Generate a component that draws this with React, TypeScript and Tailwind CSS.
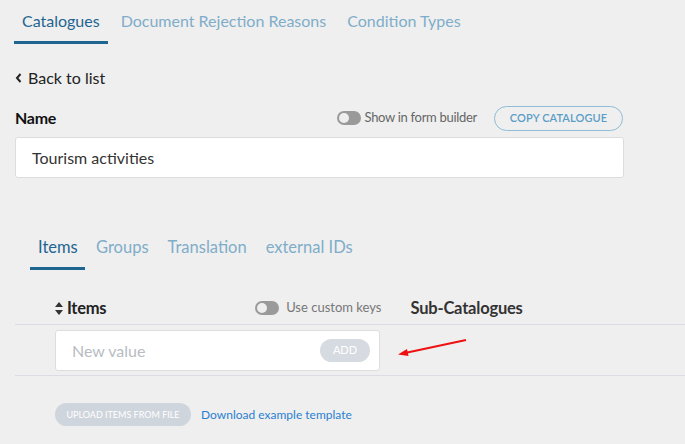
import React from 'react';

const Toggle: React.FC = () => (
    <span className="relative inline-block w-[24px] h-[14px] rounded-full bg-[#9a9a9a]">
        <span className="absolute left-[2px] top-[2px] w-[10px] h-[10px] rounded-full bg-[#eeeeee]" />
    </span>
);

const SortIcon: React.FC = () => (
    <svg width="8" height="13" viewBox="0 0 8 13" className="mr-[4px]">
        <path d="M4 0 L8 5 H0 Z" fill="#333" />
        <path d="M4 13 L8 8 H0 Z" fill="#333" />
    </svg>
);

const App: React.FC = () => {
    const topTabs = ['Catalogues', 'Document Rejection Reasons', 'Condition Types'];
    const innerTabs = ['Items', 'Groups', 'Translation', 'external IDs'];

    return (
        <div className="w-[685px] h-[444px] bg-[#efefef] overflow-hidden font-['Lato',sans-serif] relative">
            {/* main tabs */}
            <div className="flex pl-[14px] pt-[8px]">
                {topTabs.map((t, i) => (
                    <div
                        key={t}
                        className={`px-[8px] h-[36px] flex items-start pt-[1px] text-[16px] leading-[24px] ${i === 0 ? 'text-[#1f6592] border-b-[3px] border-[#1f6592]' : 'text-[#7fadc9] ml-[5px]'}`}
                    >
                        {t}
                    </div>
                ))}
            </div>

            {/* back link */}
            <div className="flex items-center pl-[15px] mt-[22px] text-[16px] leading-[24px] text-[#222]">
                <svg width="8" height="10" viewBox="0 0 8 10" className="mr-[5px]">
                    <path d="M5.5 1 L2 5 L5.5 9" stroke="#222" strokeWidth="2" fill="none" />
                </svg>
                Back to list
            </div>

            {/* name header */}
            <div className="flex items-center w-[623px] pl-[15px] mt-[15px] h-[26px]">
                <span className="text-[16px] font-bold text-[#111] tracking-[-0.3px]">Name</span>
                <div className="ml-auto flex items-center">
                    <Toggle />
                    <span className="ml-[3px] text-[13px] text-[#666] tracking-[-0.3px]">Show in form builder</span>
                    <button className="ml-[17px] h-[25px] w-[129px] rounded-full border border-[#8fbcd6] text-[11px] font-semibold text-[#5a9dc6] tracking-[0.1px]">
                        COPY CATALOGUE
                    </button>
                </div>
            </div>

            <div className="ml-[15px] mt-[6px] w-[609px] h-[41px] bg-white border border-[#dddddd] rounded-[3px] flex items-center pl-[16px] text-[16px] text-[#333]">
                Tourism activities
            </div>

            {/* inner tabs */}
            <div className="flex pl-[30px] mt-[54px]">
                {innerTabs.map((t, i) => (
                    <div
                        key={t}
                        className={`px-[8px] h-[38px] text-[16.5px] leading-[22px] pt-[4px] ${i === 0 ? 'text-[#1f6592] border-b-[3px] border-[#1f6592] w-[55px]' : 'text-[#7fadc9] ml-[3px]'}`}
                    >
                        {t}
                    </div>
                ))}
            </div>

            {/* items header */}
            <div className="flex items-center mt-[27px] h-[22px] pl-[55px]">
                <SortIcon />
                <span className="text-[16.5px] font-bold text-[#222] tracking-[-0.3px]">Items</span>
                <div className="ml-[149px] flex items-center">
                    <Toggle />
                    <span className="ml-[7px] text-[13px] text-[#777]">Use custom keys</span>
                </div>
                <span className="ml-[29px] text-[16.5px] font-bold text-[#333] tracking-[-0.2px]">Sub-Catalogues</span>
            </div>

            <div className="ml-[15px] mt-[5px] border-t border-[#dcdde3]">
                <div className="ml-[40px] mt-[5px] w-[325px] h-[41px] bg-white border border-[#dddddd] rounded-[3px] flex items-center pl-[16px] pr-[9px]">
                    <span className="text-[16px] text-[#b8bcc2]">New value</span>
                    <span className="ml-auto w-[50px] h-[23px] rounded-full bg-[#d6dbe1] text-white text-[11px] flex items-center justify-center">
                        ADD
                    </span>
                </div>
                <div className="mt-[4px] border-t border-[#dcdde3]" />
            </div>

            {/* upload row */}
            <div className="flex items-center ml-[55px] mt-[27px]">
                <span className="h-[23px] w-[136px] rounded-full bg-[#cfd5dc] text-white text-[9px] flex items-center justify-center">
                    UPLOAD ITEMS FROM FILE
                </span>
                <span className="ml-[10px] text-[12px] text-[#2a7fd0]">Download example template</span>
            </div>

            {/* annotation arrow */}
            <svg className="absolute left-[395px] top-[335px]" width="75" height="25" viewBox="0 0 75 25">
                <path d="M71 5 L10 18" stroke="#ee1111" strokeWidth="2" fill="none" />
                <path d="M3 19.5 L12 14 L13.5 21 Z" fill="#ee1111" />
            </svg>
        </div>
    );
};

export default App;
